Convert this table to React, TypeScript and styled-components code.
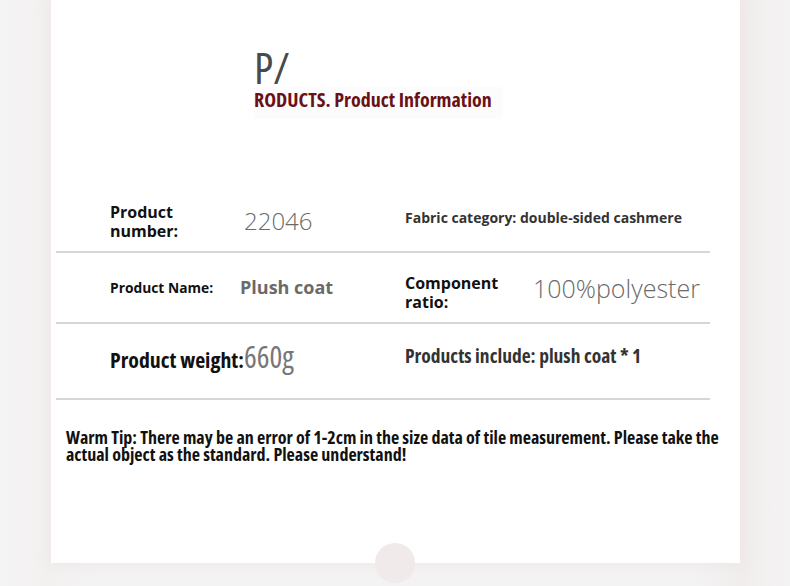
import { createGlobalStyle, styled } from "styled-components";

const GlobalStyle = createGlobalStyle`
    html, body {
        margin: 0;
        padding: 0;
        background-color: #f4f3f3;
    }
    body {
        font-family: "Open Sans", "Noto Sans", sans-serif;
    }
`;

const narrowFont = `"Open Sans", "Noto Sans", sans-serif`;

const Page = styled.div`
    width: 790px;
    height: 586px;
    overflow: hidden;
    background: linear-gradient(90deg, #f5f4f4 0%, #f3f0f0 6%, #f4f3f3 12%, #f4f3f3 88%, #f1eded 94%, #f4f3f3 100%);
`;

const Card = styled.div`
    position: relative;
    margin-left: 51px;
    width: 689px;
    height: 563px;
    background-color: #ffffff;
    box-shadow: 0 0 14px rgba(225, 205, 208, 0.35);
    padding-top: 48px;
    box-sizing: border-box;
`;

const Heading = styled.div`
    margin-left: 203px;
    display: flex;
    flex-direction: column;
    align-items: flex-start;
`;

const BigLetter = styled.div`
    font-family: ${narrowFont};
    font-stretch: 75%;
    font-size: 44px;
    line-height: 38px;
    color: #4a4a4a;
`;

const Subtitle = styled.div`
    margin-top: 1px;
    padding: 0 13px 6px 0;
    width: 236px;
    white-space: nowrap;
    background-color: #fcfcfc;
    font-family: ${narrowFont};
    font-stretch: 75%;
    font-weight: 700;
    font-size: 20px;
    line-height: 26px;
    color: #6b1014;
`;

const Table = styled.div`
    margin-top: 73px;
    margin-left: 5px;
    width: 654px;
`;

const Row = styled.div<{ $height: number }>`
    display: flex;
    align-items: center;
    height: ${(p) => p.$height}px;
    padding-left: 54px;
    border-bottom: 2px solid #d6d6d6;
    box-sizing: border-box;
`;

const Cell = styled.div<{ $width?: number; $shift?: number }>`
    display: flex;
    align-items: center;
    width: ${(p) => (p.$width ? `${p.$width}px` : "auto")};
    flex: ${(p) => (p.$width ? "none" : "1")};
    margin-top: ${(p) => p.$shift ?? 0}px;
`;

const Label = styled.div<{ $width?: number; $size?: number; $shift?: number }>`
    width: ${(p) => (p.$width ? `${p.$width}px` : "auto")};
    flex: none;
    margin-top: ${(p) => p.$shift ?? 0}px;
    font-weight: 700;
    font-size: ${(p) => p.$size ?? 16}px;
    line-height: 19px;
    color: #111111;
`;

const Value = styled.div<{ $size: number; $bold?: boolean }>`
    font-size: ${(p) => p.$size}px;
    font-weight: ${(p) => (p.$bold ? 700 : 300)};
    color: #6a6a6a;
    line-height: 1.2;
`;

const Note = styled.div`
    margin-top: -8px;
    font-weight: 700;
    font-size: 14px;
    color: #333333;
`;

const Narrow = styled.span<{ $size: number; $weight?: number; $color?: string }>`
    font-family: ${narrowFont};
    font-stretch: 75%;
    font-size: ${(p) => p.$size}px;
    font-weight: ${(p) => p.$weight ?? 700};
    color: ${(p) => p.$color ?? "#111111"};
`;

const InlineGroup = styled.div<{ $shift: number }>`
    display: flex;
    align-items: baseline;
    margin-top: ${(p) => p.$shift}px;
`;

const Tip = styled.p`
    margin: 29px 0 0 15px;
    width: 670px;
    font-family: ${narrowFont};
    font-stretch: 75%;
    font-weight: 700;
    font-size: 18px;
    line-height: 17px;
    color: #111111;
`;

const Bump = styled.div`
    position: absolute;
    left: 324px;
    bottom: -20px;
    width: 40px;
    height: 40px;
    border-radius: 50%;
    background-color: #f1eaeb;
`;

export default function App() {
    return (
        <Page>
            <GlobalStyle />
            <Card>
                <Heading>
                    <BigLetter>P/</BigLetter>
                    <Subtitle>RODUCTS. Product Information</Subtitle>
                </Heading>
                <Table>
                    <Row $height={61}>
                        <Cell $width={295}>
                            <Label $width={134}>
                                Product
                                <br />
                                number:
                            </Label>
                            <Value $size={24}>22046</Value>
                        </Cell>
                        <Cell>
                            <Note>Fabric category: double-sided cashmere</Note>
                        </Cell>
                    </Row>
                    <Row $height={71}>
                        <Cell $width={295}>
                            <Label $width={130} $size={13.8}>
                                Product Name:
                            </Label>
                            <Value $size={18} $bold>
                                Plush coat
                            </Value>
                        </Cell>
                        <Cell>
                            <Label $width={128} $shift={10}>
                                Component
                                <br />
                                ratio:
                            </Label>
                            <Value $size={25}>100%polyester</Value>
                        </Cell>
                    </Row>
                    <Row $height={76}>
                        <Cell $width={295}>
                            <InlineGroup $shift={-10}>
                                <Narrow $size={21.8}>Product weight:</Narrow>
                                <Narrow $size={30} $weight={400} $color="#777777">
                                    660g
                                </Narrow>
                            </InlineGroup>
                        </Cell>
                        <Cell>
                            <InlineGroup $shift={-12}>
                                <Narrow $size={19.5} $color="#333333">
                                    Products include: plush coat * 1
                                </Narrow>
                            </InlineGroup>
                        </Cell>
                    </Row>
                </Table>
                <Tip>
                    Warm Tip: There may be an error of 1-2cm in the size data of tile measurement. Please take the
                    actual object as the standard. Please understand!
                </Tip>
                <Bump />
            </Card>
        </Page>
    );
}
